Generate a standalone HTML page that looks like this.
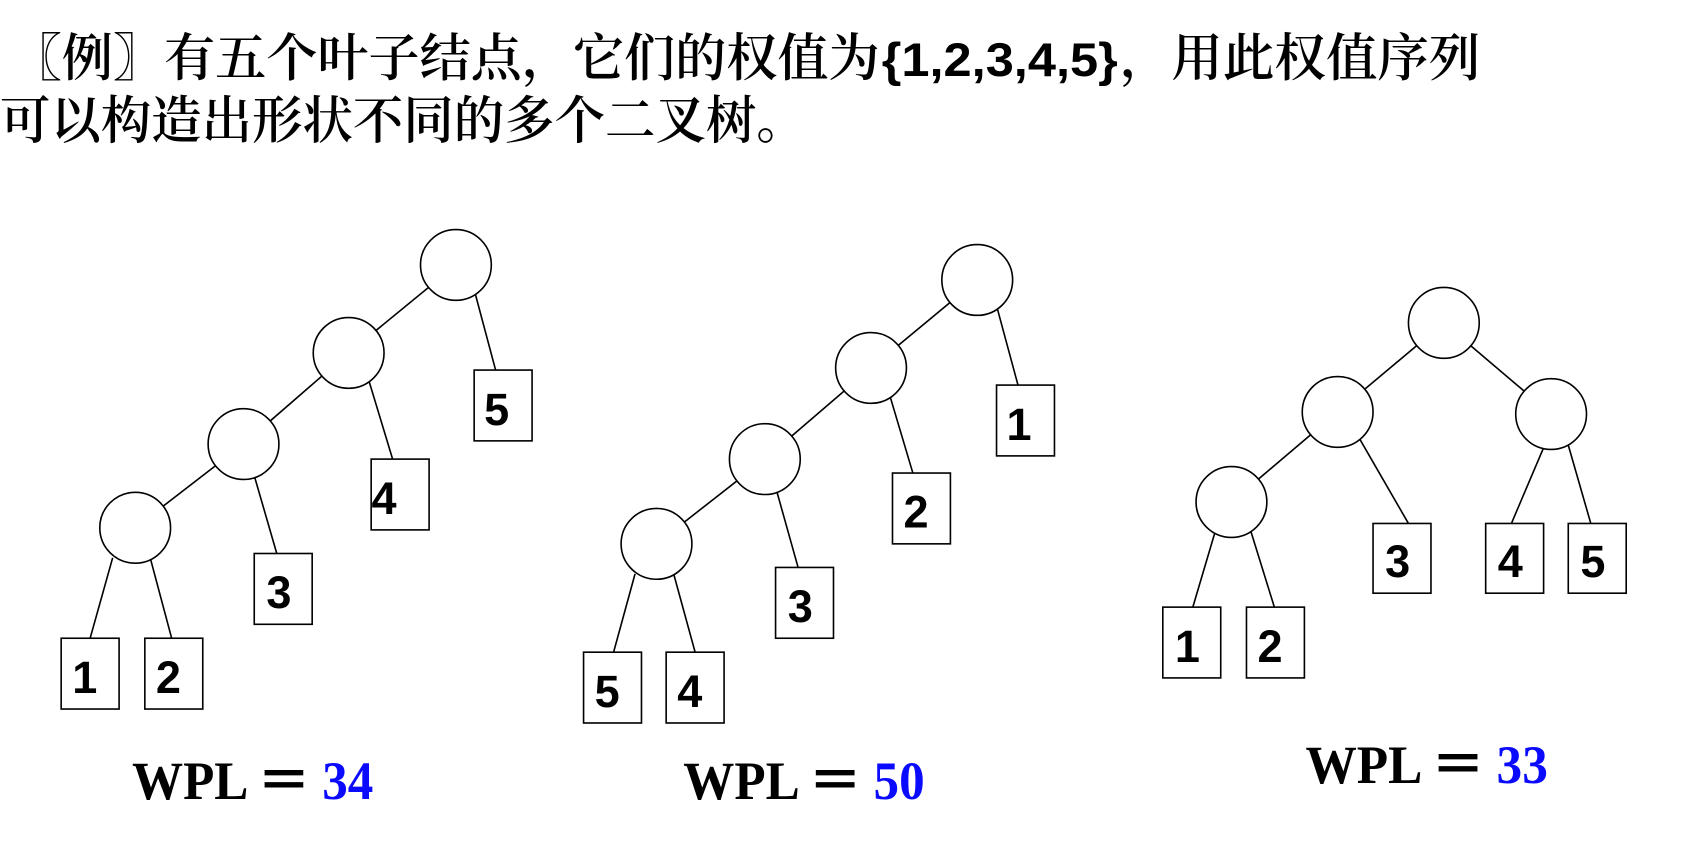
<!DOCTYPE html>
<html><head><meta charset="utf-8"><style>
html,body{margin:0;padding:0;background:#fff;width:1682px;height:862px;overflow:hidden}
svg{display:block}
.cn{font-family:"Liberation Serif","Noto Serif CJK SC",serif;font-size:48px;fill:#000;font-weight:600}
.d{font-family:"Liberation Sans",sans-serif;font-weight:bold;font-size:42px;text-anchor:middle}
.w{font-family:"Liberation Serif",serif;font-weight:bold;font-size:50px}
circle{fill:#fff;stroke:#000;stroke-width:1.5}
rect{fill:#fff;stroke:#000;stroke-width:1.5}
line{stroke:#000;stroke-width:1.5}
</style></head><body>
<svg width="1682" height="862" viewBox="0 0 1568 803.6">
<text class="cn" x="10" y="71" textLength="810" lengthAdjust="spacingAndGlyphs">〖例〗有五个叶子结点，它们的权值为</text>
<text x="822" y="71" font-family="Liberation Sans, sans-serif" font-weight="bold" font-size="44" textLength="220" lengthAdjust="spacingAndGlyphs">{1,2,3,4,5}</text>
<text class="cn" x="1044" y="71" textLength="336" lengthAdjust="spacingAndGlyphs">，用此权值序列</text>
<text class="cn" x="0" y="129" textLength="752" lengthAdjust="spacingAndGlyphs">可以构造出形状不同的多个二叉树。</text>

<!-- tree 1 -->
<line x1="425" y1="247" x2="325" y2="329"/><line x1="442" y1="270" x2="462" y2="345"/>
<line x1="325" y1="329" x2="227" y2="414"/><line x1="343" y1="352" x2="366" y2="428"/>
<line x1="227" y1="414" x2="126" y2="492"/><line x1="236" y1="440" x2="258" y2="516"/>
<line x1="105" y1="520" x2="84" y2="595"/><line x1="140" y1="520" x2="160" y2="595"/>
<circle cx="425" cy="247" r="33"/><circle cx="325" cy="329" r="33"/><circle cx="227" cy="414" r="33"/><circle cx="126" cy="492" r="33"/>
<rect x="442" y="345" width="54" height="66"/><text class="d" x="463" y="396">5</text>
<rect x="346" y="428" width="54" height="66"/><text class="d" x="358" y="479">4</text>
<rect x="237" y="516" width="54" height="66"/><text class="d" x="260" y="567">3</text>
<rect x="57" y="595" width="54" height="66"/><text class="d" x="79" y="646">1</text>
<rect x="135" y="595" width="54" height="66"/><text class="d" x="157" y="646">2</text>
<text class="w" x="123" y="745" textLength="225" lengthAdjust="spacingAndGlyphs">WPL ＝ <tspan fill="#0a0aff">34</tspan></text>

<!-- tree 2 -->
<line x1="911" y1="261" x2="812" y2="343"/><line x1="929" y1="285" x2="949" y2="359"/>
<line x1="812" y1="343" x2="713" y2="428"/><line x1="829" y1="367" x2="851" y2="441"/>
<line x1="713" y1="428" x2="612" y2="507"/><line x1="723" y1="454" x2="744" y2="529"/>
<line x1="592" y1="535" x2="572" y2="608"/><line x1="628" y1="535" x2="648" y2="608"/>
<circle cx="911" cy="261" r="33"/><circle cx="812" cy="343" r="33"/><circle cx="713" cy="428" r="33"/><circle cx="612" cy="507" r="33"/>
<rect x="929" y="359" width="54" height="66"/><text class="d" x="950" y="410">1</text>
<rect x="832" y="441" width="54" height="66"/><text class="d" x="854" y="492">2</text>
<rect x="723" y="529" width="54" height="66"/><text class="d" x="746" y="580">3</text>
<rect x="544" y="608" width="54" height="66"/><text class="d" x="566" y="659">5</text>
<rect x="621" y="608" width="54" height="66"/><text class="d" x="643" y="659">4</text>
<text class="w" x="637" y="745" textLength="225" lengthAdjust="spacingAndGlyphs">WPL ＝ <tspan fill="#0a0aff">50</tspan></text>

<!-- tree 3 -->
<line x1="1346" y1="301" x2="1247" y2="384"/><line x1="1346" y1="301" x2="1446" y2="386"/>
<line x1="1247" y1="384" x2="1148" y2="468"/><line x1="1268" y1="410" x2="1313" y2="488"/>
<line x1="1440" y1="415" x2="1409" y2="488"/><line x1="1462" y1="415" x2="1483" y2="488"/>
<line x1="1133" y1="495" x2="1112" y2="566"/><line x1="1166" y1="495" x2="1188" y2="566"/>
<circle cx="1346" cy="301" r="33"/><circle cx="1247" cy="384" r="33"/><circle cx="1446" cy="386" r="33"/><circle cx="1148" cy="468" r="33"/>
<rect x="1280" y="488" width="54" height="65"/><text class="d" x="1303" y="538">3</text>
<rect x="1385" y="488" width="54" height="65"/><text class="d" x="1408" y="538">4</text>
<rect x="1462" y="488" width="54" height="65"/><text class="d" x="1485" y="538">5</text>
<rect x="1084" y="566" width="54" height="66"/><text class="d" x="1107" y="617">1</text>
<rect x="1162" y="566" width="54" height="66"/><text class="d" x="1184" y="617">2</text>
<text class="w" x="1217" y="730" textLength="226" lengthAdjust="spacingAndGlyphs">WPL ＝ <tspan fill="#0a0aff">33</tspan></text>
</svg>
</body></html>
